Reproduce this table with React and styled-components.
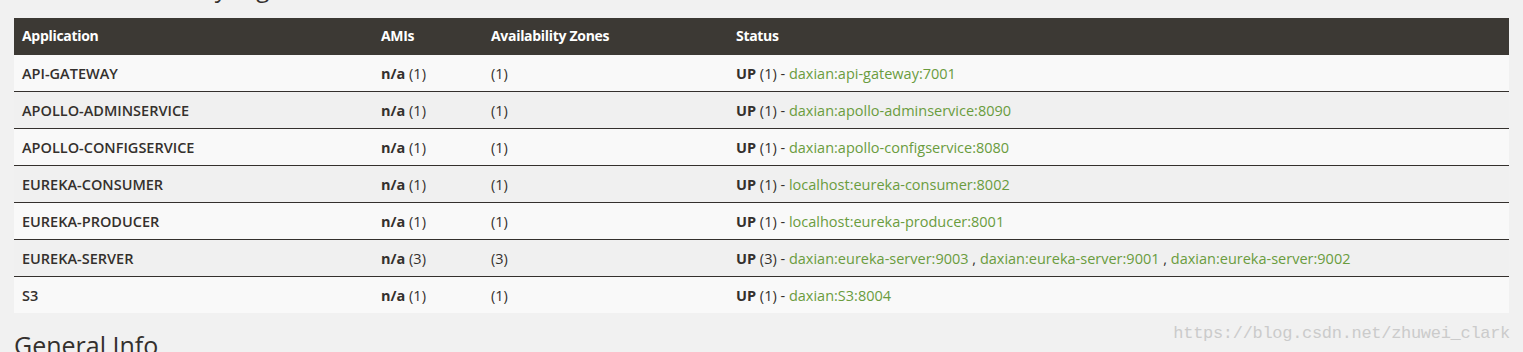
import styled, { createGlobalStyle } from 'styled-components';

const GlobalStyle = createGlobalStyle`
  html, body {
    margin: 0;
    padding: 0;
    background: #f1f1f1;
    overflow: hidden;
  }
  body {
    font-family: "Open Sans", "Liberation Sans", sans-serif;
    color: #34302d;
  }
`;

const Page = styled.div`
  position: relative;
  width: 1523px;
  height: 352px;
  padding: 0 14px;
  box-sizing: border-box;
  overflow: hidden;
`;

const Title = styled.h1`
  margin: -27px 0 15px;
  font-size: 24px;
  line-height: 30px;
  font-weight: 400;
  color: #34302d;
`;

const Table = styled.table`
  width: 100%;
  border-collapse: collapse;
  table-layout: fixed;
`;

const HeadCell = styled.th`
  box-sizing: border-box;
  width: ${p => p.$w || 'auto'};
  height: 37px;
  padding: 0 8px 2px;
  background: #3c3934;
  color: #fff;
  text-align: left;
  font-size: 14px;
  font-weight: 700;
  letter-spacing: -0.3px;
`;

const Row = styled.tr`
  background: ${p => (p.$odd ? '#f9f9f9' : '#f0f0f0')};
  &:not(:first-child) td {
    border-top: 1px solid #34302d;
  }
`;

const Cell = styled.td`
  height: 36px;
  padding: 0 8px;
  font-size: 14.5px;
  font-weight: ${p => (p.$name ? 600 : 400)};
  white-space: nowrap;
`;

const Strong = styled.b`
  font-weight: 700;
`;

const Link = styled.a`
  color: #6a9c3e;
  text-decoration: none;
`;

const Section = styled.h2`
  margin: 17px 0 0;
  font-size: 25px;
  line-height: 30px;
  font-weight: 400;
  color: #34302d;
`;

const Watermark = styled.div`
  position: absolute;
  right: 13px;
  bottom: 9px;
  font-family: "Liberation Mono", monospace;
  font-size: 17px;
  color: #cbcbcb;
  letter-spacing: -0.3px;
`;

const apps = [
  { name: 'API-GATEWAY', n: 1, hosts: ['daxian:api-gateway:7001'] },
  { name: 'APOLLO-ADMINSERVICE', n: 1, hosts: ['daxian:apollo-adminservice:8090'] },
  { name: 'APOLLO-CONFIGSERVICE', n: 1, hosts: ['daxian:apollo-configservice:8080'] },
  { name: 'EUREKA-CONSUMER', n: 1, hosts: ['localhost:eureka-consumer:8002'] },
  { name: 'EUREKA-PRODUCER', n: 1, hosts: ['localhost:eureka-producer:8001'] },
  {
    name: 'EUREKA-SERVER',
    n: 3,
    hosts: ['daxian:eureka-server:9003', 'daxian:eureka-server:9001', 'daxian:eureka-server:9002'],
  },
  { name: 'S3', n: 1, hosts: ['daxian:S3:8004'] },
];

const App = () => (
  <Page>
    <GlobalStyle />
    <Title>Instances currently registered with Eureka</Title>
    <Table>
      <thead>
        <tr>
          <HeadCell $w="359px">Application</HeadCell>
          <HeadCell $w="110px">AMIs</HeadCell>
          <HeadCell $w="245px">Availability Zones</HeadCell>
          <HeadCell>Status</HeadCell>
        </tr>
      </thead>
      <tbody>
        {apps.map((app, i) => (
          <Row key={app.name} $odd={i % 2 === 0}>
            <Cell $name>{app.name}</Cell>
            <Cell>
              <Strong>n/a</Strong> ({app.n})
            </Cell>
            <Cell>({app.n})</Cell>
            <Cell>
              <Strong>UP</Strong> ({app.n}) -{' '}
              {app.hosts.map((h, j) => (
                <span key={h}>
                  {j > 0 && ' , '}
                  <Link href="#">{h}</Link>
                </span>
              ))}
            </Cell>
          </Row>
        ))}
      </tbody>
    </Table>
    <Section>General Info</Section>
    <Watermark>https://blog.csdn.net/zhuwei_clark</Watermark>
  </Page>
);

export default App;
